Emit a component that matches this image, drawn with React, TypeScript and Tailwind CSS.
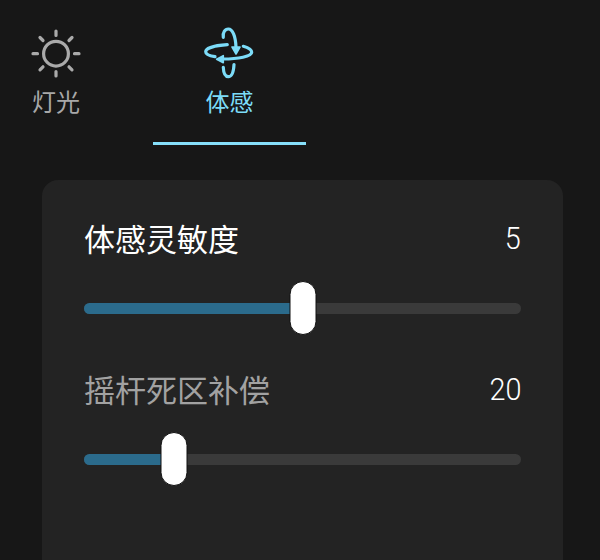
const SliderRow = ({ label, value, pct, dim }: { label: string; value: string; pct: number; dim?: boolean }) => (
  <div>
    <div className="flex h-10 items-center justify-between">
      <span className={`text-[31px] leading-10 ${dim ? "text-[#a2a2a2]" : "text-white"}`}>{label}</span>
      <span className="inline-block origin-right scale-x-[0.9] font-['Roboto',sans-serif] text-[32px] font-light leading-10 text-white">{value}</span>
    </div>
    <div className="relative mt-6 flex h-[52px] items-center">
      <div className="h-[11px] w-full overflow-hidden rounded-full bg-[#3a3a3a]">
        <div className="h-full bg-[#2b6b8c]" style={{ width: `${pct}%` }} />
      </div>
      <div
        className="absolute -top-px h-[54px] w-[27px] -translate-x-1/2 rounded-full border border-[#111111] bg-white"
        style={{ left: `${pct}%` }}
      />
    </div>
  </div>
);

const SunIcon = () => (
  <svg width="60" height="60" viewBox="0 0 60 60" fill="none" stroke="#aaaaaa" strokeWidth="3.2" strokeLinecap="round">
    <circle cx="30" cy="29.7" r="12.4" />
    <path d="M30 7v4.5M30 47.5v4.5M7 29.7h4.5M48.5 29.7h4.5M14 13.5l3 3M43 42.8l3 3M46 13.5l-3 3M17 42.8l-3 3" />
  </svg>
);

const MotionIcon = () => (
  <svg width="60" height="60" viewBox="0 0 60 60" fill="none" stroke="#7cdcf8" strokeWidth="3.2" strokeLinecap="round" strokeLinejoin="round">
    <path d="M27.3 20.7C15 21.5 5.7 24 5.7 27.8C5.7 30 9 31.8 15 32.7" />
    <path d="M23 35C38 35 51.7 32.5 51.7 28.3C51.7 26 48.5 23.8 43.3 22.3" />
    <path d="M23.3 13.3C22.5 8.5 25 5 28.3 5C32.5 5 35.6 12 36 23.3" />
    <path d="M23.3 43.3C23.5 49 25.5 52.7 28.3 52.7C31.5 52.7 33.6 48 34 40.5" />
    <path d="M32 23H40L36 30Z" fill="#7cdcf8" strokeWidth="1.6" />
    <path d="M23.3 31.6V38.8L16.6 35.2Z" fill="#7cdcf8" strokeWidth="1.6" />
  </svg>
);

export default function App() {
  return (
    <div className="h-[560px] w-[600px] overflow-hidden bg-[#171717] font-['Noto_Sans_CJK_SC','Noto_Sans',sans-serif]">
      <div className="flex pt-6">
        <div className="mr-[41px] flex w-[112px] flex-col items-center">
          <SunIcon />
          <span className="mt-px text-2xl leading-8 text-[#a8a8a8]">灯光</span>
        </div>
        <div className="flex w-[153px] flex-col items-center">
          <MotionIcon />
          <span className="mt-px text-2xl leading-8 text-[#7cdcf8]">体感</span>
          <div className="mt-[25px] h-[3px] w-full bg-[#86dffa]" />
        </div>
      </div>
      <div className="ml-[42px] mt-[35px] h-[420px] w-[521px] rounded-2xl bg-[#232323] px-[42px] pt-[38px]">
        <SliderRow label="体感灵敏度" value="5" pct={50} />
        <div className="mt-[35px]">
          <SliderRow label="摇杆死区补偿" value="20" pct={20.5} dim />
        </div>
      </div>
    </div>
  );
}
